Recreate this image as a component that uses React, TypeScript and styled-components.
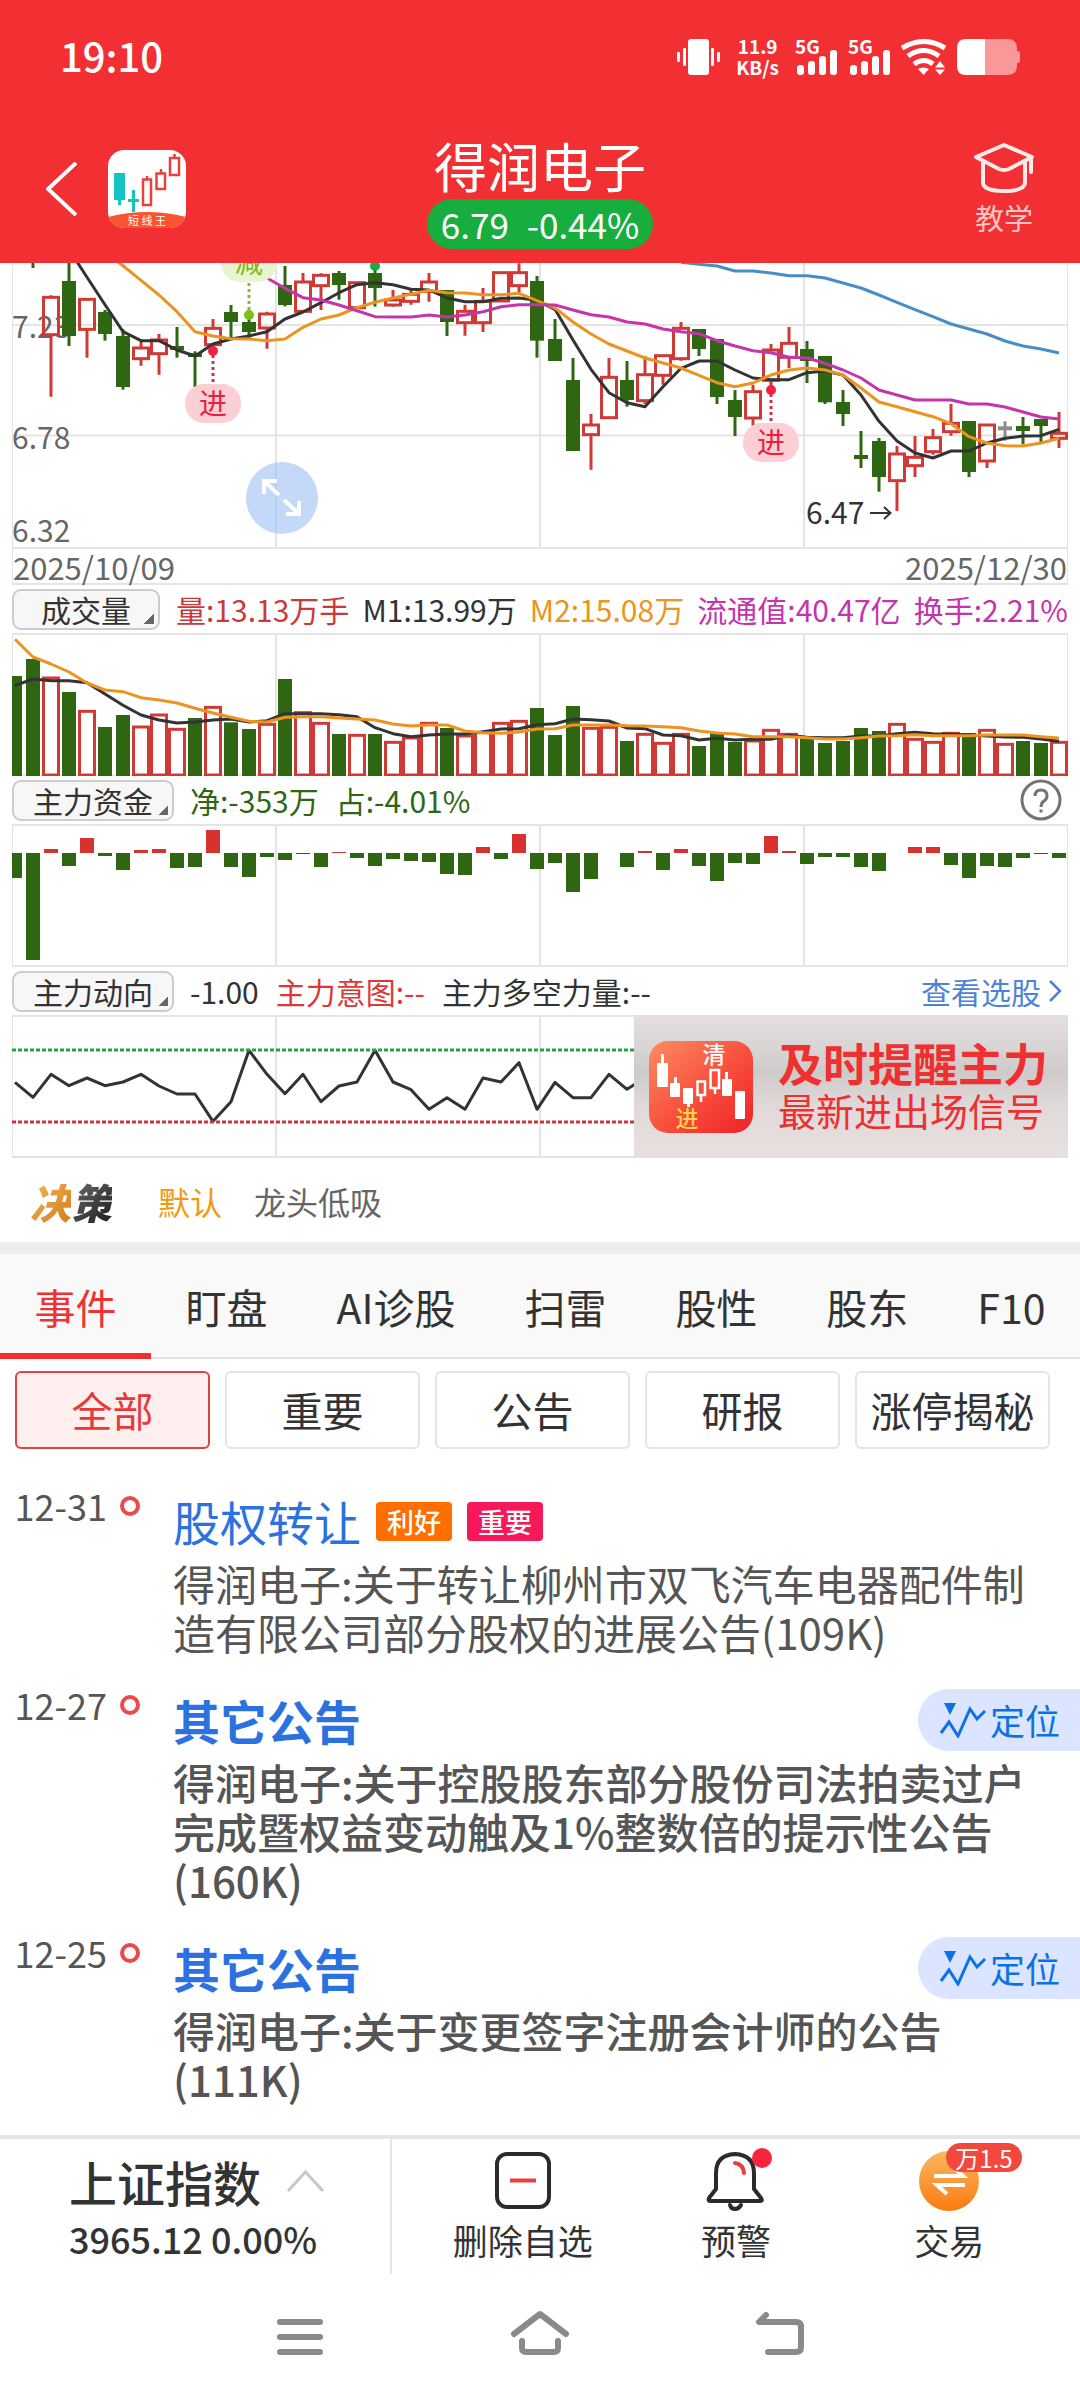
import React from 'react';
import styled, { createGlobalStyle, css } from 'styled-components';

const GREEN = '#2f6612';
const RED = '#cf3a36';
const DARK = '#333333';
const ORANGE = '#ec9320';
const PURPLE = '#c534ac';
const BLUE = '#4a8cc6';
const GRID = '#e4e4e4';
const FONT = '"Noto Sans CJK SC", "Noto Sans", sans-serif';

const GlobalStyle = createGlobalStyle`
  * { box-sizing: border-box; }
  body { margin: 0; background: #fff; font-family: ${FONT}; color: ${DARK}; }
  button, select { font-family: inherit; color: inherit; margin: 0; }
  button { border: 0; background: none; padding: 0; cursor: pointer; }
  svg { display: block; }
`;

/* ---------- chart data (y in thirds of a pixel) ---------- */

type Candle = [kind: 'r' | 'g' | 'n', high: number, top: number, bottom: number, low: number];

const candles: Candle[] = [
  ['g', -9, -9, 0, 0], ['g', -9, -9, 0, 24], ['r', 106, 112, 224, 410], ['g', 0, 63, 228, 258],
  ['r', 118, 118, 208, 293], ['g', 150, 156, 222, 242], ['g', 208, 228, 381, 389], ['r', 245, 264, 296, 317],
  ['r', 222, 240, 281, 344], ['g', 201, 258, 270, 293], ['g', 274, 280, 291, 381], ['r', 177, 205, 254, 260],
  ['g', 135, 156, 186, 235], ['g', 165, 186, 216, 240], ['r', 155, 162, 204, 266], ['g', 18, 75, 135, 139],
  ['r', 39, 66, 154, 154], ['r', 40, 46, 77, 150], ['g', 33, 39, 75, 119], ['r', 66, 68, 143, 143],
  ['g', 20, 39, 84, 140], ['r', 90, 120, 135, 140], ['r', 90, 103, 124, 134], ['r', 39, 66, 94, 125],
  ['g', 90, 90, 186, 228], ['r', 134, 154, 188, 227], ['r', 84, 124, 188, 216], ['r', 38, 38, 123, 123],
  ['r', 10, 38, 77, 104], ['g', 48, 63, 242, 293], ['g', 177, 237, 303, 303], ['g', 294, 360, 573, 573],
  ['r', 462, 495, 524, 629], ['r', 294, 352, 473, 473], ['g', 303, 360, 420, 440], ['r', 289, 344, 422, 432],
  ['r', 287, 287, 346, 374], ['r', 186, 205, 296, 302], ['g', 207, 207, 267, 288], ['g', 237, 237, 411, 432],
  ['g', 390, 420, 471, 528], ['r', 374, 395, 474, 497], ['r', 252, 270, 361, 380], ['r', 201, 250, 292, 324],
  ['g', 243, 267, 303, 369], ['g', 288, 288, 427, 432], ['g', 390, 426, 462, 498], ['g', 513, 585, 597, 624],
  ['g', 534, 543, 651, 695], ['r', 558, 582, 662, 753], ['r', 528, 592, 617, 651], ['r', 507, 533, 575, 584],
  ['r', 432, 490, 515, 527], ['g', 483, 483, 636, 651], ['r', 492, 495, 603, 624], ['n', 484, 499, 511, 542],
  ['g', 471, 498, 513, 553], ['g', 477, 477, 498, 546], ['r', 456, 520, 535, 564],
];

const ma5 = [-32, 52, 134, 215, 242, 242, 270, 288, 252, 237, 228, 215, 177, 156, 128, 98, 74, 68, 74, 88, 90, 114, 125, 125, 115, 114, 121, 148, 240, 328, 398, 428, 440, 380, 325, 303, 303, 330, 354, 359, 359, 338, 333, 345, 405, 484, 543, 579, 594, 573, 573, 549, 535, 528, 527, 508];
const ma10 = [-25, 17, 61, 105, 155, 215, 228, 236, 237, 242, 237, 202, 177, 165, 143, 127, 114, 103, 91, 98, 99, 104, 104, 100, 122, 144, 186, 222, 252, 273, 294, 309, 324, 346, 368, 380, 369, 345, 330, 324, 330, 345, 384, 426, 440, 455, 470, 491, 530, 549, 557, 558, 549, 535];
const ma20 = [54, 85, 113, 120, 135, 152, 170, 171, 171, 165, 171, 165, 155, 140, 134, 134, 135, 150, 164, 171, 186, 192, 207, 215, 221, 242, 258, 272, 278, 292, 294, 310, 330, 354, 390, 405, 420, 420, 420, 432, 432, 441, 456, 471, 477];
const ma60 = [7, 13, 18, 33, 33, 39, 47, 47, 54, 69, 84, 105, 127, 149, 170, 192, 207, 222, 243, 258, 267, 279];

const volumes =
  'g288 g237 r294 g336 r394 g441 g405 r441 r405 r448 g414 r382 g427 g447 r433 g297 r398 r430 g462 r466 g462 r487 r474 r430 g444 r468 r458 r430 r424 g384 g465 g378 r445 r442 g483 r463 r490 r463 g498 g460 g486 r483 r451 r463 g475 g489 g483 g444 g453 r433 r478 r487 r460 g459 r451 r493 g483 g489 r487'.split(' ');
const volM1 = [317, 297, 302, 302, 308, 342, 376, 405, 420, 429, 426, 420, 417, 426, 422, 401, 401, 401, 404, 410, 443, 461, 470, 465, 462, 462, 455, 447, 446, 434, 431, 417, 419, 423, 444, 446, 465, 467, 480, 475, 480, 478, 478, 466, 472, 473, 473, 468, 468, 461, 457, 461, 463, 465, 468, 471, 472, 477, 484];
const volM2 = [178, 231, 252, 276, 309, 330, 335, 353, 360, 369, 385, 399, 412, 424, 426, 412, 410, 410, 414, 417, 420, 432, 438, 435, 435, 453, 458, 460, 456, 447, 446, 435, 435, 435, 437, 438, 440, 443, 453, 459, 462, 470, 470, 470, 473, 477, 477, 473, 468, 467, 464, 467, 467, 467, 465, 465, 465, 470, 474];

const funds = [75, 321, -12, 39, -45, 9, 51, -9, -12, 45, 42, -69, 42, 72, 12, 21, 3, 42, -3, 15, 39, 18, 24, 27, 63, 66, -18, 18, -57, 48, 30, 117, 78, 0, 42, -6, 51, -12, 39, 84, 30, 33, -51, -6, 33, 12, 12, 42, 54, 0, -18, -18, 36, 75, 39, 42, 15, 3, 15];

const trend = [367, 412, 343, 377, 354, 377, 366, 343, 378, 402, 402, 484, 425, 271, 343, 401, 343, 425, 378, 366, 271, 366, 389, 448, 413, 448, 354, 366, 308, 448, 367, 413, 413, 343, 388, 354];

const cx = (i: number) => 3 + 18 * i;
const points = (values: number[], start: number, offset: number) =>
  values.map((v, i) => `${cx(i + start)},${((v - offset) / 3).toFixed(1)}`).join(' ');

/* ---------- shared pieces ---------- */

const Page = styled.div`
  display: flex;
  flex-direction: column;
  min-height: 100vh;
  background: #fff;
`;

const ChartSvg = styled.svg`
  width: 100%;
  height: auto;
`;

const Line = styled.polyline<{ $color: string }>`
  fill: none;
  stroke: ${p => p.$color};
  stroke-width: 3;
  stroke-linejoin: round;
`;

/* ---------- header ---------- */

const Header = styled.header`
  background: #f23033;
  color: #fff;
`;

const StatusBar = styled.div`
  display: flex;
  align-items: center;
  height: 114px;
  padding: 0 60px;
`;

const Clock = styled.time`
  flex: 1;
  padding-bottom: 4px;
  font-size: 40px;
  font-weight: 500;
  line-height: 40px;
`;

const StatusIcons = styled.div`
  display: flex;
  align-items: center;
  gap: 10px;
`;

const NetSpeed = styled.div`
  margin: 0 6px;
  padding-bottom: 2px;
  font-size: 19px;
  font-weight: 700;
  line-height: 21px;
  text-align: center;
`;

const SignalBox = styled.div`
  position: relative;
`;

const SignalLabel = styled.span`
  position: absolute;
  left: 0;
  top: -2px;
  font-size: 19px;
  font-weight: 700;
  line-height: 17px;
`;

const TitleBar = styled.div`
  display: grid;
  grid-template-columns: 1fr auto 1fr;
  align-items: center;
  height: 149px;
  padding: 0 46px;
`;

const TitleLeft = styled.div`
  display: flex;
  align-items: center;
  gap: 31px;
`;

const TitleCenter = styled.div`
  display: flex;
  flex-direction: column;
  align-items: center;
  gap: 3px;
  padding-top: 5px;
`;

const StockName = styled.h1`
  margin: 0;
  font-size: 53px;
  font-weight: 400;
  line-height: 62px;
`;

const PricePill = styled.div`
  display: flex;
  gap: 18px;
  padding: 0 14px;
  border-radius: 25px;
  background: #17ae3f;
  font-size: 35px;
  line-height: 50px;
`;

const TeachButton = styled.button`
  justify-self: end;
  display: flex;
  flex-direction: column;
  align-items: center;
  gap: 6px;
  font-size: 29px;
  line-height: 36px;
  color: #ffc4c4;
`;

const AppLogo = () => (
  <svg width="78" height="78" viewBox="0 0 78 78" role="img" aria-label="短线王">
    <defs>
      <clipPath id="logoClip"><rect width="78" height="78" rx="16" /></clipPath>
    </defs>
    <g clipPath="url(#logoClip)">
      <rect width="78" height="78" fill="#fff" />
      <path d="M0 67Q39 57 78 67V78H0Z" fill="#fb5430" />
      <g fill="#14c4c0">
        <rect x="6" y="23" width="11" height="27" /><rect x="10" y="48" width="3" height="7" />
        <rect x="24" y="40" width="3" height="22" /><rect x="20" y="49" width="11" height="3" />
      </g>
      <g fill="none" stroke="#e8423c" strokeWidth="2.5">
        <path d="M35 29.500H43V55H35ZM39 26V29M48.500 23.500H57V39H48.500ZM53 19V23M62 8H71V25H62ZM66.500 4V8" />
      </g>
      <text x="39" y="75" fontSize="11" fill="#fff" textAnchor="middle">短 线 王</text>
    </g>
  </svg>
);

const Signal = () => (
  <SignalBox>
    <SignalLabel>5G</SignalLabel>
    <svg width="43" height="36" viewBox="0 0 43 36" fill="#fff">
      <rect x="2" y="26" width="7" height="10" rx="3" />
      <rect x="13" y="22" width="7" height="14" rx="3" />
      <rect x="24" y="17" width="7" height="19" rx="3" />
      <rect x="35" y="11" width="7" height="25" rx="3" />
    </svg>
  </SignalBox>
);

/* ---------- charts ---------- */

const Charts = styled.section`
  padding: 0 12px;
`;

const Panel = styled.div`
  position: relative;
`;

const DateRow = styled.div`
  display: flex;
  justify-content: space-between;
  height: 36px;
  border: 1px solid ${GRID};
  border-top: 0;
  border-bottom-width: 2px;
  font-size: 31px;
  line-height: 35px;
  color: #666;
`;

const ExpandButton = styled.button`
  position: absolute;
  left: 234px;
  top: 199px;
  width: 72px;
  height: 72px;
  border-radius: 36px;
  background: rgba(156, 190, 243, 0.6);
`;

const IndicatorRow = styled.div`
  display: flex;
  align-items: center;
  gap: 16px;
  height: 48px;
  font-size: 30px;
  line-height: 40px;
  white-space: nowrap;
`;

const IndicatorSelect = styled.select<{ $pad: number }>`
  appearance: none;
  flex: none;
  height: 41px;
  padding: 0 ${p => p.$pad}px 2px;
  border: 2px solid #ccc;
  border-radius: 9px;
  background: linear-gradient(135deg, transparent 50%, #666 50%) right 4px bottom 4px / 10px 10px no-repeat #f7f7f7;
  font-size: 30px;
  line-height: 36px;
`;

const Readings = styled.div<{ $spread?: boolean }>`
  display: flex;
  flex: 1;
  gap: ${p => (p.$spread ? 0 : '17px')};
  justify-content: ${p => (p.$spread ? 'space-between' : 'flex-start')};
`;

const Reading = styled.span<{ $color: string }>`
  color: ${p => p.$color};
`;

const HelpButton = styled.button`
  width: 42px;
  height: 42px;
  margin-right: 6px;
`;

const PickLink = styled.a`
  display: flex;
  align-items: center;
  gap: 8px;
  padding-right: 6px;
  color: #4b84d4;
  text-decoration: none;
`;

const Banner = styled.a`
  position: absolute;
  top: 0;
  right: 0;
  bottom: 0;
  width: 434px;
  display: flex;
  align-items: center;
  gap: 25px;
  padding-left: 15px;
  background: linear-gradient(180deg, #e5dfdf 0%, #d9d5d5 22%, #cfcaca 40%, #e2dada 66%, #e8dfdf 100%);
  color: #ee3030;
  text-decoration: none;
  white-space: nowrap;
`;

const BannerCopy = styled.span`
  padding-bottom: 5px;
`;

const BannerTitle = styled.strong`
  display: block;
  font-size: 45px;
  font-weight: 700;
  line-height: 51px;
`;

const BannerText = styled.span`
  display: block;
  font-size: 38px;
  line-height: 44px;
`;

const Columns = ({ height }: { height: number }) => (
  <g stroke={GRID}>
    <path d={`M0.500 0V${height}M1055.500 0V${height}`} />
    <path strokeWidth="2" d={`M264 0V${height}M528 0V${height}M792 0V${height}`} />
  </g>
);

const Marker = ({ x, y, color, fill, children }: { x: number; y: number; color: string; fill: string; children: string }) => (
  <g>
    <rect x={x - 28} y={y} width="56" height="39" rx="19" fill={fill} />
    <text x={x} y={y + 30} fontSize="28" textAnchor="middle" fill={color}>{children}</text>
  </g>
);

const PriceChart = () => (
  <ChartSvg viewBox="0 0 1056 286" role="img" aria-label="日K线">
    <Columns height={286} />
    <path d="M0 62H1056M0 172.500H1056M0 285H1056" stroke={GRID} strokeWidth="2" />
    <g fontSize="30" fill="#666">
      <text x="0" y="75">7.23</text>
      <text x="0" y="186">6.78</text>
      <text x="0" y="279">6.32</text>
    </g>
    <g transform="translate(0 -3)">
      {candles.map(([kind, high, top, bottom, low], i) => {
        const color = kind === 'r' ? RED : kind === 'g' ? GREEN : '#8c8c8c';
        const x = cx(i);
        if (kind === 'r') {
          return (
            <g key={i} stroke={color} strokeWidth="3" fill="none">
              <path d={`M${x} ${high / 3}V${top / 3}M${x} ${bottom / 3}V${low / 3}`} />
              <rect x={x - 7.5} y={top / 3} width="15" height={(bottom - top) / 3} />
            </g>
          );
        }
        return (
          <g key={i} fill={color}>
            <rect x={x - 1.5} y={high / 3} width="3" height={(low - high) / 3} />
            <rect x={x - 7} y={top / 3} width="14" height={(bottom - top) / 3} />
          </g>
        );
      })}
      <Line $color={DARK} points={points(ma5, 3, 0)} />
      <Line $color={ORANGE} points={points(ma10, 5, 0)} />
      <Line $color={PURPLE} points={points(ma20, 14, 0)} />
      <Line $color={BLUE} points={points(ma60, 37, 0)} />
      <g strokeWidth="3" strokeDasharray="3 3">
        <path d="M201 95V123M759 134V161" stroke="#d2304a" />
        <path d="M237 23V52" stroke="#86bb2a" />
      </g>
      <circle cx="201" cy="91" r="5" fill="#f0213f" />
      <circle cx="759" cy="130" r="5" fill="#f0213f" />
      <circle cx="237" cy="55" r="5" fill="#80bf18" />
      <circle cx="363" cy="6" r="5" fill="#17ae3f" />
      <Marker x={201} y={124} color="#e6213d" fill="#fbcfd4">进</Marker>
      <Marker x={759} y={163} color="#e6213d" fill="#fbcfd4">进</Marker>
      <Marker x={237} y={-17} color="#80b91c" fill="#e8f4d2">减</Marker>
      <text x="794" y="264" fontSize="30" fill={DARK}>6.47</text>
      <path d="M858 253H878M872 247L878.500 253L872 259" fill="none" stroke={DARK} strokeWidth="2" />
    </g>
  </ChartSvg>
);

const VolumeChart = () => (
  <ChartSvg viewBox="0 0 1056 143" role="img" aria-label="成交量">
    <Columns height={143} />
    <path d="M0 1H1056M0 142.500H1056" stroke={GRID} strokeWidth="2" />
    {volumes.map((v, i) => {
      const y = (Number(v.slice(1)) - 159) / 3;
      return v[0] === 'g' ? (
        <rect key={i} x={cx(i) - 7} y={y} width="14" height={143 - y} fill={GREEN} />
      ) : (
        <rect key={i} x={cx(i) - 7.5} y={y} width="15" height={142 - y} fill="#fff" stroke={RED} strokeWidth="3" />
      );
    })}
    <Line $color={DARK} points={points(volM1, 0, 159)} />
    <Line $color={ORANGE} points={points(volM2, 0, 159)} />
  </ChartSvg>
);

const FundsChart = () => (
  <ChartSvg viewBox="0 0 1056 143" role="img" aria-label="主力资金">
    <Columns height={143} />
    <path d="M0 1H1056M0 142H1056" stroke={GRID} strokeWidth="2" />
    {funds.map((v, i) => (
      <rect key={i} x={cx(i) - 7} y={29 + Math.min(v, 0) / 3} width="14" height={Math.abs(v) / 3} fill={v < 0 ? '#d8322f' : GREEN} />
    ))}
  </ChartSvg>
);

const TrendChart = () => (
  <ChartSvg viewBox="0 0 1056 143" role="img" aria-label="主力动向">
    <Columns height={143} />
    <path d="M0 1H1056M0 142H1056" stroke={GRID} strokeWidth="2" />
    <Line $color={DARK} points={points(trend, 0, 165)} />
    <path d="M0 35H1056" stroke="#27a344" strokeWidth="3" strokeDasharray="4 2" />
    <path d="M0 107H1056" stroke="#cf3340" strokeWidth="3" strokeDasharray="4 2" />
  </ChartSvg>
);

const BannerIcon = () => (
  <svg width="104" height="92" viewBox="0 0 104 92">
    <defs>
      <linearGradient id="bannerRed" x1="0" y1="0" x2="1" y2="1">
        <stop offset="0" stopColor="#fd8d60" />
        <stop offset="0.5" stopColor="#f9523f" />
        <stop offset="1" stopColor="#ee2226" />
      </linearGradient>
    </defs>
    <rect width="104" height="92" rx="19" fill="url(#bannerRed)" />
    <g fill="#fff">
      <rect x="8" y="22" width="11" height="24" rx="1" /><rect x="12" y="13" width="3" height="10" />
      <rect x="21" y="42" width="10" height="14" rx="1" /><rect x="25" y="36" width="3" height="7" />
      <rect x="34" y="47" width="10" height="16" rx="1" /><rect x="38" y="62" width="3" height="4" />
      <rect x="73" y="38" width="10" height="17" rx="1" /><rect x="76" y="31" width="3" height="8" />
      <rect x="86" y="50" width="10" height="28" rx="1" />
    </g>
    <path d="M48.500 40.500H56V54H48.500ZM52 54V61M61.500 29H70V47H61.500ZM66 47V53" fill="none" stroke="#fff" strokeWidth="2.5" />
    <text x="65" y="22" fontSize="23" fontWeight="500" fill="#fff" textAnchor="middle">清</text>
    <text x="38" y="86" fontSize="23" fontWeight="500" fill="#ffd84a" textAnchor="middle">进</text>
  </svg>
);

/* ---------- strategy, tabs, filters ---------- */

const StrategyRow = styled.div`
  display: flex;
  align-items: center;
  height: 84px;
  padding: 1px 30px 0;
`;

const StrategyLogo = styled.strong`
  margin-right: 46px;
  font-size: 41px;
  font-weight: 900;
  font-style: italic;
  line-height: 44px;
`;

const LogoHalf = styled.span<{ $from: string; $to: string }>`
  background: linear-gradient(135deg, ${p => p.$from}, ${p => p.$to});
  background-clip: text;
  color: transparent;
`;

const StrategyButton = styled.button<{ $active?: boolean }>`
  margin-right: 32px;
  font-size: 32px;
  line-height: 44px;
  color: ${p => (p.$active ? '#f09a10' : '#666')};
`;

const Tabs = styled.nav`
  display: flex;
  height: 117px;
  border-top: 12px solid #eceeef;
  border-bottom: 2px solid ${GRID};
  background: #f9f9f9;
`;

const Tab = styled.button<{ $active?: boolean }>`
  flex: 1 0 auto;
  margin-bottom: -2px;
  padding: 4px 34px 0;
  border-bottom: 6px solid transparent;
  font-size: 41px;
  line-height: 60px;
  ${p => p.$active && css`
    color: #ef3234;
    border-color: #f23033;
  `}
`;

const Filters = styled.div`
  display: grid;
  grid-template-columns: repeat(5, 1fr);
  gap: 15px;
  padding: 12px 30px 35px 15px;
`;

const FilterButton = styled.button<{ $active?: boolean }>`
  height: 78px;
  padding-bottom: 2px;
  border: 2px solid ${p => (p.$active ? '#dc4444' : GRID)};
  border-radius: 6px;
  background: ${p => (p.$active ? '#ffefee' : '#fff')};
  color: ${p => (p.$active ? '#e63a3a' : DARK)};
  font-size: 41px;
  line-height: 60px;
  white-space: nowrap;
`;

/* ---------- events ---------- */

const EventList = styled.ul`
  flex: 1;
  margin: 0;
  padding: 0;
  list-style: none;
`;

const EventItem = styled.li`
  display: grid;
  grid-template-columns: 107px 66px 1fr;
  padding-bottom: 27px;
`;

const EventDate = styled.time`
  font-size: 36px;
  line-height: 42px;
  text-align: right;
  color: #555;
`;

const EventDot = styled.i`
  width: 20px;
  height: 20px;
  margin: 12px 0 0 13px;
  border: 4px solid #e94b4b;
  border-radius: 10px;
`;

const EventHead = styled.div`
  display: flex;
  align-items: center;
  gap: 15px;
  height: 74px;
`;

const EventTitle = styled.h2<{ $bold?: boolean }>`
  margin: 0;
  font-size: 47px;
  font-weight: ${p => (p.$bold ? 700 : 400)};
  line-height: 60px;
  color: #2b72e0;
`;

const Tag = styled.span<{ $color: string }>`
  padding: 0 11px;
  border-radius: 4px;
  background: ${p => p.$color};
  color: #fff;
  font-size: 27px;
  font-weight: 500;
  line-height: 39px;
`;

const LocateButton = styled.button`
  display: flex;
  align-items: center;
  gap: 4px;
  height: 62px;
  margin-left: auto;
  padding: 0 20px 0 22px;
  border-radius: 31px 0 0 31px;
  background: #dbe5ff;
  color: #0b71e4;
  font-size: 35px;
  line-height: 50px;
`;

const EventBody = styled.p<{ $bold?: boolean }>`
  margin: 0;
  padding-right: 34px;
  font-size: 42px;
  font-weight: ${p => (p.$bold ? 500 : 400)};
  line-height: 49px;
  color: #555;
`;

interface EventData {
  date: string;
  title: string;
  body: string;
  tags?: { text: string; color: string }[];
}

const events: EventData[] = [
  {
    date: '12-31',
    title: '股权转让',
    body: '得润电子:关于转让柳州市双飞汽车电器配件制造有限公司部分股权的进展公告(109K)',
    tags: [{ text: '利好', color: '#ff6f00' }, { text: '重要', color: '#f5195a' }],
  },
  { date: '12-27', title: '其它公告', body: '得润电子:关于控股股东部分股份司法拍卖过户完成暨权益变动触及1%整数倍的提示性公告(160K)' },
  { date: '12-25', title: '其它公告', body: '得润电子:关于变更签字注册会计师的公告(111K)' },
];

/* ---------- footer ---------- */

const Footer = styled.footer`
  display: flex;
  height: 139px;
  border-top: 4px solid #e5e6e6;
`;

const IndexButton = styled.button`
  width: 392px;
  padding: 2px 0 0 69px;
  border-right: 2px solid ${GRID};
  text-align: left;
`;

const IndexName = styled.span`
  display: flex;
  align-items: center;
  gap: 26px;
  font-size: 48px;
  font-weight: 500;
  line-height: 60px;
  white-space: nowrap;
`;

const IndexValue = styled.span`
  display: block;
  font-size: 36px;
  font-weight: 500;
  line-height: 54px;
  white-space: nowrap;
`;

const Actions = styled.div`
  display: flex;
  flex: 1;
  padding: 0 24px;
`;

const Action = styled.button`
  flex: 1;
  display: flex;
  flex-direction: column;
  align-items: center;
  justify-content: flex-start;
  gap: 6px;
  padding-top: 12px;
  font-size: 35px;
  line-height: 46px;
`;

const IconBox = styled.span`
  position: relative;
`;

const RateBadge = styled.span`
  position: absolute;
  left: 27px;
  top: -8px;
  padding: 0 9px;
  border-radius: 15px;
  background: #f4483c;
  color: #fff;
  font-size: 24px;
  line-height: 29px;
  white-space: nowrap;
`;

const AlertDot = styled.i`
  position: absolute;
  right: -6px;
  top: -3px;
  width: 20px;
  height: 20px;
  border-radius: 10px;
  background: #f6243d;
`;

const SystemNav = styled.nav`
  display: flex;
  justify-content: center;
  align-items: center;
  gap: 180px;
  height: 126px;
`;

const NavButton = styled.button`
  width: 60px;
  height: 60px;
`;

export default function App() {
  return (
    <Page>
      <GlobalStyle />
      <Header>
        <StatusBar>
          <Clock>19:10</Clock>
          <StatusIcons>
            <svg width="43" height="36" viewBox="0 0 43 36" fill="#fff">
              <rect x="11" width="21" height="36" rx="3" />
              <rect x="6" y="9" width="3" height="18" rx="1" /><rect x="0" y="13" width="3" height="10" rx="1" />
              <rect x="34" y="9" width="3" height="18" rx="1" /><rect x="40" y="13" width="3" height="10" rx="1" />
            </svg>
            <NetSpeed>11.9<br />KB/s</NetSpeed>
            <Signal />
            <Signal />
            <svg width="46" height="36" viewBox="0 0 46 36" fill="none" stroke="#fff" strokeWidth="5">
              <path d="M1 9Q23 -4 44 9" /><path d="M7 17Q23 6 38 17" /><path d="M13 25Q23 18 32 25" />
              <path d="M17 30Q22 27 28 30L22.500 36Z" fill="#fff" stroke="none" />
              <path d="M34 28.500L39 22L44 28.500ZM34 30.500H44L39 36Z" fill="#fff" stroke="none" />
            </svg>
            <svg width="63" height="36" viewBox="0 0 63 36">
              <path d="M28 0H50Q60 0 60 9V12Q63 12 63 14V22Q63 24 60 24V27Q60 36 50 36H28Z" fill="#fff" opacity="0.5" />
              <path d="M28 0H9Q0 0 0 9V27Q0 36 9 36H28Z" fill="#fff" />
            </svg>
          </StatusIcons>
        </StatusBar>
        <TitleBar>
          <TitleLeft>
            <button aria-label="返回">
              <svg width="31" height="54" viewBox="0 0 31 54" fill="none" stroke="#fff" strokeWidth="4">
                <path d="M30 1L2 27L30 53" />
              </svg>
            </button>
            <AppLogo />
          </TitleLeft>
          <TitleCenter>
            <StockName>得润电子</StockName>
            <PricePill><span>6.79</span><span>-0.44%</span></PricePill>
          </TitleCenter>
          <TeachButton>
            <svg width="60" height="50" viewBox="0 0 60 50" fill="none" stroke="#ffeaea" strokeWidth="4" strokeLinejoin="round" strokeLinecap="round">
              <path d="M30 2L58 14L35 26Q30 28 25 26L2 14ZM9 20V40Q10 48 30 48Q50 48 51 40V20M57 15V29" />
            </svg>
            教学
          </TeachButton>
        </TitleBar>
      </Header>

      <Charts>
        <Panel>
          <PriceChart />
          <ExpandButton aria-label="全屏">
            <svg width="72" height="72" viewBox="0 0 72 72" fill="none" stroke="#fff" strokeWidth="4">
              <path d="M18 32V19H31M19 20L33 33M38 38L52 51M53 39V52H40" />
            </svg>
          </ExpandButton>
        </Panel>
        <DateRow><span>2025/10/09</span><span>2025/12/30</span></DateRow>

        <IndicatorRow>
          <IndicatorSelect $pad={27} aria-label="指标一"><option>成交量</option></IndicatorSelect>
          <Readings $spread>
            <Reading $color="#cb3a38">量:13.13万手</Reading>
            <Reading $color={DARK}>M1:13.99万</Reading>
            <Reading $color={ORANGE}>M2:15.08万</Reading>
            <Reading $color={PURPLE}>流通值:40.47亿</Reading>
            <Reading $color={PURPLE}>换手:2.21%</Reading>
          </Readings>
        </IndicatorRow>
        <VolumeChart />

        <IndicatorRow>
          <IndicatorSelect $pad={19} aria-label="指标二"><option>主力资金</option></IndicatorSelect>
          <Readings>
            <Reading $color={GREEN}>净:-353万</Reading>
            <Reading $color={GREEN}>占:-4.01%</Reading>
          </Readings>
          <HelpButton aria-label="帮助">
            <svg width="42" height="42" viewBox="0 0 42 42" fill="none" stroke="#737373" strokeWidth="3">
              <circle cx="21" cy="21" r="19" />
              <path d="M15 17Q15 11 21 11T27 17Q27 20 24 22T21 28" />
              <path d="M21 30.500V33.500" />
            </svg>
          </HelpButton>
        </IndicatorRow>
        <FundsChart />

        <IndicatorRow>
          <IndicatorSelect $pad={19} aria-label="指标三"><option>主力动向</option></IndicatorSelect>
          <Readings>
            <Reading $color={DARK}>-1.00</Reading>
            <Reading $color="#dc3836">主力意图:--</Reading>
            <Reading $color={DARK}>主力多空力量:--</Reading>
          </Readings>
          <PickLink href="#pick">
            查看选股
            <svg width="13" height="22" viewBox="0 0 13 22" fill="none" stroke="#4b84d4" strokeWidth="2.5">
              <path d="M1 1L11 11L1 21" />
            </svg>
          </PickLink>
        </IndicatorRow>
        <Panel>
          <TrendChart />
          <Banner href="#signals">
            <BannerIcon />
            <BannerCopy>
              <BannerTitle>及时提醒主力</BannerTitle>
              <BannerText>最新进出场信号</BannerText>
            </BannerCopy>
          </Banner>
        </Panel>
      </Charts>

      <StrategyRow>
        <StrategyLogo>
          <LogoHalf $from="#f8bd66" $to="#d07712">决</LogoHalf>
          <LogoHalf $from="#777" $to="#151515">策</LogoHalf>
        </StrategyLogo>
        <StrategyButton $active>默认</StrategyButton>
        <StrategyButton>龙头低吸</StrategyButton>
      </StrategyRow>

      <Tabs>
        {['事件', '盯盘', 'AI诊股', '扫雷', '股性', '股东', 'F10'].map((name, i) => (
          <Tab key={name} $active={i === 0}>{name}</Tab>
        ))}
      </Tabs>
      <Filters>
        {['全部', '重要', '公告', '研报', '涨停揭秘'].map((name, i) => (
          <FilterButton key={name} $active={i === 0}>{name}</FilterButton>
        ))}
      </Filters>

      <EventList>
        {events.map(event => (
          <EventItem key={event.date}>
            <EventDate>{event.date}</EventDate>
            <EventDot />
            <div>
              <EventHead>
                <EventTitle $bold={!event.tags}>{event.title}</EventTitle>
                {event.tags?.map(tag => <Tag key={tag.text} $color={tag.color}>{tag.text}</Tag>)}
                {!event.tags && (
                  <LocateButton>
                    <svg width="46" height="36" viewBox="0 0 46 36" fill="none" stroke="#0b71e4" strokeWidth="3">
                      <path d="M1 31L9 20L18 34L30 7L37 17L45 9" />
                      <path d="M4 1H16L10 13Z" fill="#0b71e4" stroke="none" />
                    </svg>
                    定位
                  </LocateButton>
                )}
              </EventHead>
              <EventBody $bold={!event.tags}>{event.body}</EventBody>
            </div>
          </EventItem>
        ))}
      </EventList>

      <Footer>
        <IndexButton>
          <IndexName>
            上证指数
            <svg width="37" height="22" viewBox="0 0 37 22" fill="none" stroke="#c8c8c8" strokeWidth="3">
              <path d="M1 21L18.500 2L36 21" />
            </svg>
          </IndexName>
          <IndexValue>3965.12 0.00%</IndexValue>
        </IndexButton>
        <Actions>
          <Action>
            <IconBox>
              <svg width="60" height="60" viewBox="0 0 60 60" fill="none" strokeWidth="4">
                <rect x="4" y="3" width="52" height="53" rx="10" stroke="#2b2b2b" />
                <path d="M17 29.500H43" stroke="#e8403e" />
              </svg>
            </IconBox>
            删除自选
          </Action>
          <Action>
            <IconBox>
              <svg width="60" height="60" viewBox="0 0 60 60" fill="none" strokeWidth="4" strokeLinejoin="round" strokeLinecap="round">
                <path d="M29 3Q10 4 10 22V38L3 47Q2 50 4 50H54Q57 50 55 47L48 38V22Q48 4 29 3Z" stroke="#2b2b2b" />
                <path d="M24 54Q25 58 29 58T35 54" stroke="#2b2b2b" />
                <path d="M29 12Q37 13 38 22" stroke="#e8403e" />
              </svg>
              <AlertDot />
            </IconBox>
            预警
          </Action>
          <Action>
            <IconBox>
              <svg width="60" height="60" viewBox="0 0 60 60">
                <defs>
                  <linearGradient id="coin" x1="0" y1="0" x2="0" y2="1">
                    <stop offset="0" stopColor="#fdb660" /><stop offset="1" stopColor="#f97c10" />
                  </linearGradient>
                </defs>
                <circle cx="30" cy="30" r="30" fill="url(#coin)" />
                <path d="M15 25H44L35 17M46 34H18L28 43" fill="none" stroke="#fff" strokeWidth="4" />
              </svg>
              <RateBadge>万1.5</RateBadge>
            </IconBox>
            交易
          </Action>
        </Actions>
      </Footer>

      <SystemNav>
        <NavButton aria-label="最近任务">
          <svg width="60" height="60" viewBox="0 0 60 60" stroke="#8a8a8a" strokeWidth="6" strokeLinecap="round">
            <path d="M10 15H50M10 30H50M10 45H50" />
          </svg>
        </NavButton>
        <NavButton aria-label="主页">
          <svg width="60" height="60" viewBox="0 0 60 60" fill="none" stroke="#8a8a8a" strokeWidth="6" strokeLinecap="round" strokeLinejoin="round">
            <path d="M4 27L30 7L56 27M12 34V41Q12 45 16 45H44Q48 45 48 41V34" />
          </svg>
        </NavButton>
        <NavButton aria-label="返回上一级">
          <svg width="60" height="60" viewBox="0 0 60 60" fill="none" stroke="#8a8a8a" strokeWidth="6" strokeLinecap="round" strokeLinejoin="round">
            <path d="M16 8L9 15H46Q51 15 51 20V40Q51 45 46 45H18" />
          </svg>
        </NavButton>
      </SystemNav>
    </Page>
  );
}
